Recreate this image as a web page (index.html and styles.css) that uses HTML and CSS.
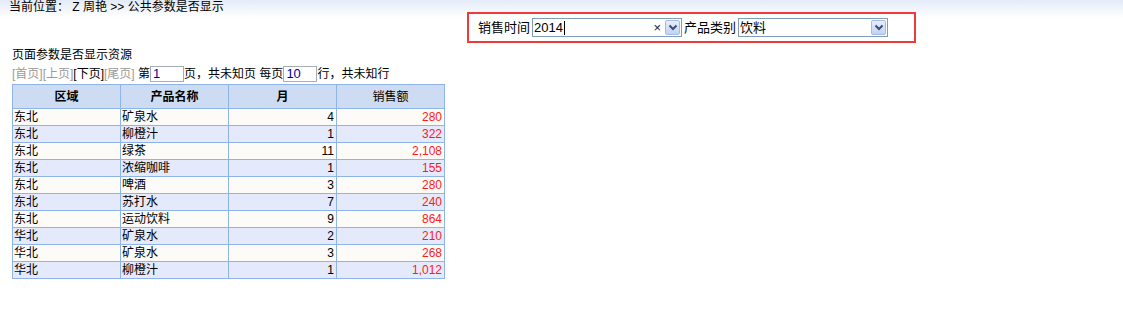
FILE: index.html
```html
<!DOCTYPE html>
<html>
<head>
<meta charset="utf-8">
<link rel="stylesheet" href="styles.css">
</head>
<body>
<div class="crumb">当前位置： Z 周艳 &gt;&gt; 公共参数是否显示</div>
<div class="filter">
  <span class="flabel">销售时间</span>
  <div class="combo">
    <span class="cval">2014<span class="caret"></span></span>
    <span class="clear">×</span>
    <span class="dd"><svg width="10" height="7" viewBox="0 0 10 7"><polyline points="1.5,1.5 5,5 8.5,1.5" fill="none" stroke="#3c4c74" stroke-width="2"/></svg></span>
  </div>
  <span class="flabel">产品类别</span>
  <div class="combo">
    <span class="cval">饮料</span>
    <span class="dd"><svg width="10" height="7" viewBox="0 0 10 7"><polyline points="1.5,1.5 5,5 8.5,1.5" fill="none" stroke="#3c4c74" stroke-width="2"/></svg></span>
  </div>
</div>
<div class="title">页面参数是否显示资源</div>
<div class="pager">
  <span class="pl off">[首页]</span><span class="pl off">[上页]</span><span class="pl">[下页]</span><span class="pl off">[尾页]</span>
  <span class="pt">&nbsp;第</span><span class="pin">1</span><span class="pt">页，共未知页 每页</span><span class="pin">10</span><span class="pt">行，共未知行</span>
</div>
<table class="grid">
  <thead>
    <tr><th>区域</th><th>产品名称</th><th>月</th><th class="thin">销售额</th></tr>
  </thead>
  <tbody>
    <tr class="odd"><td>东北</td><td>矿泉水</td><td class="num">4</td><td class="num red">280</td></tr>
    <tr class="even"><td>东北</td><td>柳橙汁</td><td class="num">1</td><td class="num red">322</td></tr>
    <tr class="odd"><td>东北</td><td>绿茶</td><td class="num">11</td><td class="num red">2,108</td></tr>
    <tr class="even"><td>东北</td><td>浓缩咖啡</td><td class="num">1</td><td class="num red">155</td></tr>
    <tr class="odd"><td>东北</td><td>啤酒</td><td class="num">3</td><td class="num red">280</td></tr>
    <tr class="even"><td>东北</td><td>苏打水</td><td class="num">7</td><td class="num red">240</td></tr>
    <tr class="odd"><td>东北</td><td>运动饮料</td><td class="num">9</td><td class="num red">864</td></tr>
    <tr class="even"><td>华北</td><td>矿泉水</td><td class="num">2</td><td class="num red">210</td></tr>
    <tr class="odd"><td>华北</td><td>矿泉水</td><td class="num">3</td><td class="num red">268</td></tr>
    <tr class="even"><td>华北</td><td>柳橙汁</td><td class="num">1</td><td class="num red">1,012</td></tr>
  </tbody>
</table>
</body>
</html>
```
FILE: styles.css
```css
html, body {
  margin: 0;
  padding: 0;
}
body {
  font-family: "Liberation Sans", "Noto Sans CJK SC", sans-serif;
  font-size: 12px;
  color: #000;
  background: #fff linear-gradient(to bottom, #e4ebf7 0, #ffffff 18px) no-repeat;
  width: 1123px;
  height: 328px;
}
.crumb {
  height: 12px;
  line-height: 14px;
  padding-left: 9px;
  white-space: nowrap;
}
.filter {
  margin-left: 467px;
  width: 445px;
  height: 27px;
  border: 2px solid #f03a3a;
  display: flex;
  align-items: center;
  box-sizing: content-box;
}
.flabel {
  font-size: 13px;
  line-height: 16px;
  margin-left: 9px;
  margin-right: 2px;
  white-space: nowrap;
}
.filter .flabel + .combo + .flabel {
  margin-left: 2px;
}
.combo {
  width: 148px;
  height: 17px;
  border: 1px solid #7f9db9;
  background: #fff;
  display: flex;
  align-items: center;
  position: relative;
}
.cval {
  flex: 1;
  font-size: 13px;
  line-height: 16px;
  padding-left: 1px;
  display: flex;
  align-items: center;
}
.caret {
  display: inline-block;
  width: 1px;
  height: 14px;
  background: #000;
  margin-left: 1px;
}
.clear {
  font-size: 13px;
  line-height: 16px;
  margin-right: 4px;
  color: #222;
}
.dd {
  width: 15px;
  height: 15px;
  border: 1px solid #a7bbe2;
  border-radius: 2px;
  background: linear-gradient(to bottom, #e6eefc, #c0d3f6);
  display: flex;
  align-items: center;
  justify-content: center;
  box-sizing: border-box;
  margin-right: 1px;
}
.title {
  margin-top: 5px;
  padding-left: 12px;
  line-height: 14px;
  height: 14px;
}
.pager {
  margin-top: 4px;
  padding-left: 12px;
  height: 16px;
  display: flex;
  align-items: center;
  white-space: nowrap;
}
.pl {
  line-height: 16px;
}
.pl.off {
  color: #9a9a9a;
}
.pt {
  line-height: 16px;
}
.pin {
  width: 34px;
  height: 16px;
  border: 1px solid #a5acb2;
  box-sizing: border-box;
  line-height: 14px;
  padding-left: 2px;
  font-size: 13px;
  color: #0000a0;
  background: #fff;
}
.grid {
  margin-top: 2px;
  margin-left: 12px;
  border-collapse: collapse;
  width: 433px;
  table-layout: fixed;
}
.grid th, .grid td {
  border: 1px solid #8fb5e6;
  overflow: hidden;
  white-space: nowrap;
}
.grid th {
  height: 23px;
  padding: 0 1px;
  background: #cddcf2;
  font-weight: bold;
  text-align: center;
  line-height: 16px;
  font-size: 12px;
}
.grid th.thin {
  font-weight: normal;
}
.grid td {
  height: 16px;
  line-height: 16px;
  padding: 0 2px 0 1px;
}
.grid tr.odd td {
  background: #fcfbf7;
}
.grid tr.even td {
  background: #e4e9fc;
}
.grid td.num {
  text-align: right;
}
.grid td.red {
  color: #ff1a1a;
}
```
